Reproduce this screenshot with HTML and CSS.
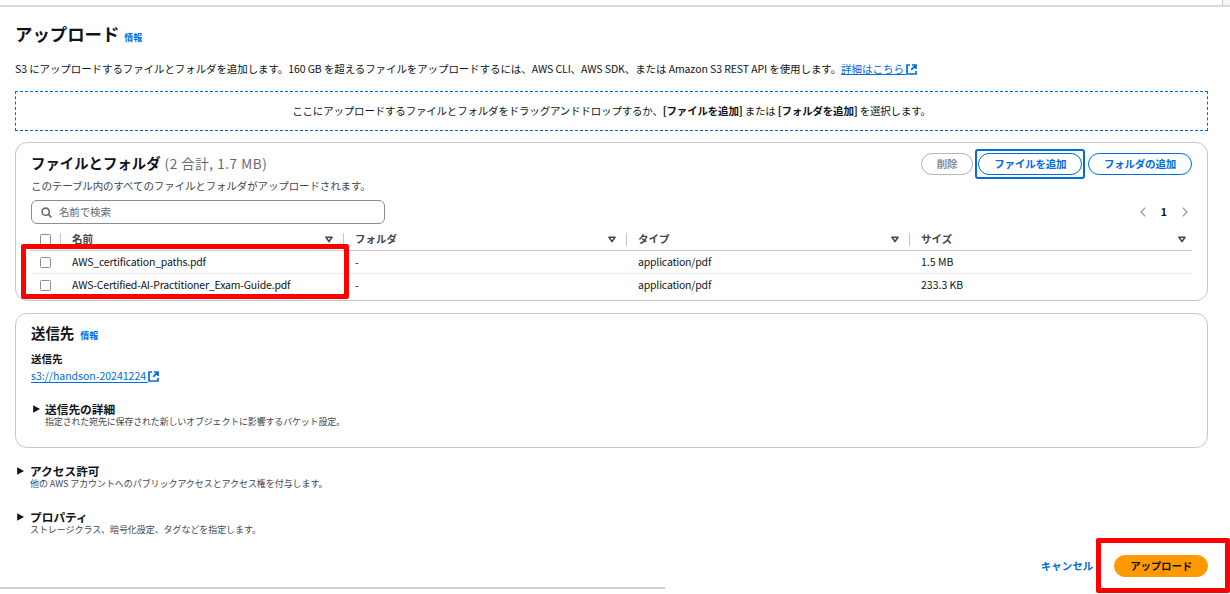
FILE: index.html
```html
<!DOCTYPE html>
<html lang="ja">
<head>
  <meta charset="UTF-8">
  <meta name="viewport" content="width=device-width, initial-scale=1.0">
  <title>アップロード</title>
  <link rel="stylesheet" href="styles.css">
</head>
<body>
  <!-- Icons -->
  <svg class="sprite" width="0" height="0">
    <symbol id="external" viewBox="0 0 11 11">
      <path d="M4 1H1v9h9V7M6 1h4v4M9.8 1.2L5.2 5.8" fill="none" stroke="currentColor" stroke-width="1.7"/>
    </symbol>
    <symbol id="sort" viewBox="0 0 8 7">
      <path d="M1 1.2h6L4 5.6z" fill="none" stroke="currentColor" stroke-width="1.6" stroke-linejoin="round"/>
    </symbol>
    <symbol id="caret" viewBox="0 0 7 8">
      <path d="M0.2 0.2v7.6L7 4z" fill="currentColor"/>
    </symbol>
  </svg>

  <div class="top-bar"><div class="top-corner"></div></div>

  <div class="page">
    <!-- Title -->
    <div class="title-row">
      <h1>アップロード</h1>
      <a class="info">情報</a>
    </div>
    <p class="intro"><span class="intro-text">S3 にアップロードするファイルとフォルダを追加します。160 GB を超えるファイルをアップロードするには、AWS CLI、AWS SDK、または Amazon S3 REST API を使用します。</span><a class="link">詳細はこちら</a><svg class="external"><use href="#external"/></svg></p>

    <div class="dropzone"><span>ここにアップロードするファイルとフォルダをドラッグアンドドロップするか、<b>[ファイルを追加]</b> または <b>[フォルダを追加]</b> を選択します。</span></div>

    <!-- Files -->
    <div class="card files">
      <div class="card-header">
        <h2>ファイルとフォルダ</h2>
        <span class="count">(2 合計, 1.7 MB)</span>
        <div class="buttons">
          <button class="button disabled">削除</button>
          <button class="button focused">ファイルを追加</button>
          <button class="button">フォルダの追加</button>
        </div>
      </div>
      <div class="description">このテーブル内のすべてのファイルとフォルダがアップロードされます。</div>
      <div class="tools">
        <div class="search">
          <svg class="search-icon" viewBox="0 0 11 11"><circle cx="4.7" cy="4.7" r="3.6"/><path d="M7.4 7.4l3 3"/></svg>
          <span>名前で検索</span>
        </div>
        <div class="pager">
          <svg class="chevron" viewBox="0 0 6 10"><path d="M5.2 0.8L1 5l4.2 4.2"/></svg>
          <span class="page-number">1</span>
          <svg class="chevron" viewBox="0 0 6 10"><path d="M0.8 0.8L5 5 0.8 9.2"/></svg>
        </div>
      </div>
      <div class="table">
        <div class="row head">
          <div class="check"><i class="checkbox"></i></div>
          <div class="cell"><span>名前</span><svg class="sort"><use href="#sort"/></svg></div>
          <div class="cell"><span>フォルダ</span><svg class="sort"><use href="#sort"/></svg></div>
          <div class="cell"><span>タイプ</span><svg class="sort"><use href="#sort"/></svg></div>
          <div class="cell"><span>サイズ</span><svg class="sort"><use href="#sort"/></svg></div>
        </div>
        <div class="row">
          <div class="check"><i class="checkbox"></i></div>
          <div class="cell tight">AWS_certification_paths.pdf</div>
          <div class="cell">-</div>
          <div class="cell tight">application/pdf</div>
          <div class="cell">1.5 MB</div>
        </div>
        <div class="row">
          <div class="check"><i class="checkbox"></i></div>
          <div class="cell tight">AWS-Certified-AI-Practitioner_Exam-Guide.pdf</div>
          <div class="cell">-</div>
          <div class="cell tight">application/pdf</div>
          <div class="cell">233.3 KB</div>
        </div>
      </div>
      <div class="highlight highlight-files"></div>
    </div>

    <!-- Destination -->
    <div class="card destination">
      <div class="card-header">
        <h2>送信先</h2>
        <a class="info">情報</a>
      </div>
      <div class="label">送信先</div>
      <div class="bucket"><a class="link">s3://handson-20241224</a><svg class="external"><use href="#external"/></svg></div>
      <div class="expander">
        <svg class="caret"><use href="#caret"/></svg>
        <div>
          <h3>送信先の詳細</h3>
          <p>指定された宛先に保存された新しいオブジェクトに影響するバケット設定。</p>
        </div>
      </div>
    </div>

    <div class="expander">
      <svg class="caret"><use href="#caret"/></svg>
      <div>
        <h3>アクセス許可</h3>
        <p>他の AWS アカウントへのパブリックアクセスとアクセス権を付与します。</p>
      </div>
    </div>
    <div class="expander">
      <svg class="caret"><use href="#caret"/></svg>
      <div>
        <h3>プロパティ</h3>
        <p>ストレージクラス、暗号化設定、タグなどを指定します。</p>
      </div>
    </div>

    <!-- Actions -->
    <div class="actions">
      <a class="cancel">キャンセル</a>
      <button class="button primary">アップロード</button>
      <div class="highlight highlight-upload"></div>
    </div>
  </div>
  <div class="status-line"></div>
</body>
</html>
```
FILE: styles.css
```css
* {
  box-sizing: border-box;
}

body {
  margin: 0;
  height: 594px;
  overflow: hidden;
  display: flex;
  flex-direction: column;
  font-family: "Noto Sans CJK JP", sans-serif;
  font-size: 10.5px;
  line-height: 16px;
  color: #0f141a;
  background-color: #ffffff;
}

h1, h2, h3, p {
  margin: 0;
}

.sprite {
  display: none;
}

/* Top edge */
.top-bar {
  height: 7px;
  flex-shrink: 0;
  display: flex;
  justify-content: flex-end;
  border-bottom: 2px solid #d9dadb;
}

.top-corner {
  width: 8px;
  border-left: 1px solid #c6c6cd;
  background-color: #f6f6f9;
}

.page {
  padding: 14px 22px 0 15px;
  flex: 1;
}

/* Title */
.title-row {
  display: flex;
  align-items: baseline;
  gap: 5px;
  height: 40px;
}

h1 {
  font-size: 17.4px;
  line-height: 26px;
}

.info {
  font-size: 9px;
  font-weight: 700;
  color: #006ce0;
}

.title-row .info {
  line-height: 18px;
}

.intro {
  display: flex;
  height: 30px;
  white-space: nowrap;
}

.intro-text {
  letter-spacing: -0.095px;
}

.link {
  height: 14px;
  padding-right: 2px;
  border-bottom: 1px solid #006ce0;
  color: #006ce0;
}

.external {
  width: 11px;
  height: 11px;
  margin-top: 3px;
  color: #006ce0;
}

.dropzone {
  height: 40px;
  display: flex;
  align-items: center;
  justify-content: center;
  border: 1px dashed #006ce0;
  letter-spacing: -0.19px;
}

/* Cards */
.card {
  position: relative;
  border: 1px solid #c6c6cd;
  border-radius: 12px;
  padding: 0 15px;
}

.files {
  height: 159px;
  margin-top: 11px;
}

.card-header {
  display: flex;
  align-items: center;
  height: 35px;
  padding-top: 4px;
}

h2 {
  font-size: 14.4px;
  line-height: 20px;
}

.count {
  margin-left: 4px;
  font-size: 13.5px;
  letter-spacing: 0.55px;
  color: #656871;
}

.buttons {
  display: flex;
  gap: 5.5px;
  margin: 2px 0 0 auto;
}

.button {
  position: relative;
  height: 22px;
  padding: 0 15px;
  border: 1px solid #006ce0;
  border-radius: 11px;
  background-color: #ffffff;
  color: #006ce0;
  font-family: inherit;
  font-size: 10.5px;
  font-weight: 700;
  line-height: 18px;
  letter-spacing: -0.2px;
}

.button.disabled {
  padding: 0 14.5px;
  border-color: #b4b4bb;
  color: #8c8c94;
}

/* Square focus ring around the pill */
.button.focused::after {
  content: "";
  position: absolute;
  inset: -5px -4px;
  border: 2px solid #006ce0;
  border-radius: 3px;
}

.description {
  height: 22px;
  letter-spacing: -0.12px;
  color: #424650;
}

.tools {
  display: flex;
  justify-content: space-between;
  align-items: center;
  height: 24px;
}

.search {
  display: flex;
  align-items: center;
  gap: 7px;
  width: 354px;
  height: 24px;
  padding: 0 0 1px 9px;
  border: 1px solid #8c8c94;
  border-radius: 6px;
  letter-spacing: -0.15px;
  color: #656871;
}

.search-icon {
  width: 11px;
  height: 11px;
  margin-top: 1px;
  fill: none;
  stroke: #656871;
  stroke-width: 1.6;
}

.pager {
  display: flex;
  align-items: center;
  gap: 15px;
  padding-right: 4px;
}

.page-number {
  font-weight: 700;
}

.chevron {
  width: 6px;
  height: 10px;
  fill: none;
  stroke: #a4a4ad;
  stroke-width: 1.5;
}

/* Table */
.row {
  display: grid;
  grid-template-columns: 29px 283px 283px 283px 1fr;
  align-items: center;
  height: 23px;
  border-bottom: 1px solid #ebebf0;
}

.row:last-child {
  height: 22px;
  border-bottom: none;
}

.row.head {
  height: 27px;
  padding-top: 4px;
  border-bottom-color: #c6c6cd;
  font-weight: 700;
  color: #424650;
}

.check {
  padding-left: 9px;
}

.checkbox {
  display: block;
  width: 11px;
  height: 11px;
  border: 1px solid #8c8c94;
  border-radius: 1.5px;
}

.cell {
  display: flex;
  justify-content: space-between;
  align-items: center;
  padding: 0 10px 0 12px;
}

.cell.tight {
  letter-spacing: -0.19px;
}

.head .cell {
  height: 13px;
  border-left: 1px solid #c6c6cd;
  padding-left: 11px;
}

.head .cell:last-child {
  padding-right: 6px;
}

.sort {
  width: 8px;
  height: 7px;
}

/* Destination */
.destination {
  height: 135px;
  margin-top: 12px;
}

.destination .info {
  margin: 5px 0 0 6px;
}

.destination h2 {
  margin-top: -1px;
}

.label {
  margin-top: 2px;
  font-weight: 700;
}

.bucket {
  display: flex;
  height: 34px;
  padding-top: 1px;
}

.bucket .link {
  height: 15px;
}

/* Expandable sections */
.expander {
  display: flex;
  height: 46px;
}

.caret {
  width: 7px;
  height: 8px;
  margin: 4px 6px 0 2px;
}

.card .caret {
  margin-right: 5px;
}

h3 {
  font-size: 11.7px;
  line-height: 16px;
}

.expander p {
  font-size: 9px;
  line-height: 10px;
  letter-spacing: -0.07px;
  color: #424650;
}

.card .expander p {
  letter-spacing: -0.18px;
}

.destination + .expander {
  margin-top: 15px;
}

/* Actions */
.actions {
  position: relative;
  display: flex;
  justify-content: flex-end;
  align-items: center;
  gap: 21px;
}

.cancel {
  font-weight: 700;
  color: #006ce0;
}

.button.primary {
  border-color: #ff9900;
  background-color: #ff9900;
  color: #0f141a;
}

/* Red marker frames */
.highlight {
  position: absolute;
  border: 5px solid #ff0000;
  border-radius: 2px;
}

.highlight-files {
  left: 5px;
  top: 101px;
  width: 328px;
  height: 55px;
}

.highlight-upload {
  right: -22px;
  top: -17px;
  width: 134px;
  height: 55px;
}

.status-line {
  width: 665px;
  height: 2px;
  margin-bottom: 5px;
  background-color: #cfcfcf;
}
```
